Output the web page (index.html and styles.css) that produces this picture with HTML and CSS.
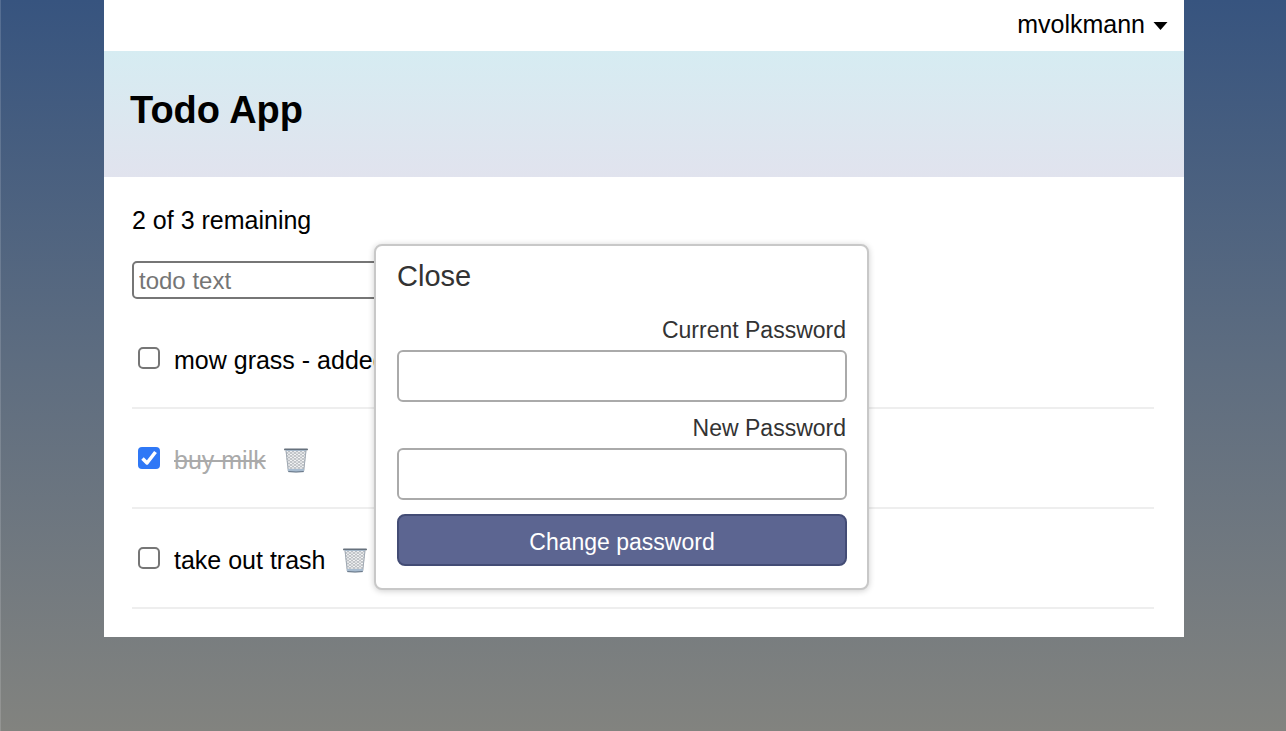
FILE: index.html
```html
<!DOCTYPE html>
<html lang="en">
<head>
<meta charset="utf-8">
<meta name="viewport" content="width=device-width, initial-scale=1">
<title>Todo App</title>
<link rel="stylesheet" href="styles.css">
</head>
<body class="page">
<svg class="defs" aria-hidden="true">
  <defs>
    <pattern id="mesh" width="4" height="3" patternUnits="userSpaceOnUse">
      <rect width="4" height="3" fill="#f3f4f5"/>
      <path d="M0 0L4 3M4 0L0 3" stroke="#a3a7ad" stroke-width="0.7"/>
    </pattern>
    <symbol id="trash" viewBox="0 0 26 26">
      <path d="M2.5 2.5H23.500L21 24.500H5Z" fill="url(#mesh)"/>
      <path d="M3 3.500L5.300 24M23 3.500L20.700 24" stroke="#a0a9b3" stroke-width="1" fill="none"/>
      <path d="M5 22H21L20.800 24.500Q13 25.500 5.200 24.500Z" fill="#a9bdd1"/>
      <path d="M5.300 24.600Q13 25.500 20.700 24.600" stroke="#5d6c7d" stroke-width="1" fill="none"/>
      <rect x="1" y="1.500" width="24" height="1.800" rx="0.9" fill="#66717d"/>
      <path d="M3 3.600H23" stroke="#a5b8ca" stroke-width="1"/>
    </symbol>
  </defs>
</svg>
<div class="panel">
  <nav class="account">
    <button class="account-button" type="button">mvolkmann
      <svg class="caret" viewBox="0 0 14 8" aria-hidden="true"><path d="M0 0H14L7 8Z"/></svg>
    </button>
  </nav>
  <header class="hero"><h1 class="title">Todo App</h1></header>
  <main class="content">
    <p class="status">2 of 3 remaining</p>
    <form class="new-todo">
      <input class="todo-input" type="text" placeholder="todo text" aria-label="todo text">
    </form>
    <ul class="todos">
      <li class="todo">
        <input class="check" type="checkbox" id="todo-1">
        <label class="todo-label" for="todo-1">mow grass - added</label>
      </li>
      <li class="todo">
        <input class="check" type="checkbox" id="todo-2" checked>
        <label class="todo-label done" for="todo-2">buy milk</label>
        <button class="delete" type="button" aria-label="Delete buy milk"><svg class="trash"><use href="#trash"/></svg></button>
      </li>
      <li class="todo">
        <input class="check" type="checkbox" id="todo-3">
        <label class="todo-label" for="todo-3">take out trash</label>
        <button class="delete" type="button" aria-label="Delete take out trash"><svg class="trash"><use href="#trash"/></svg></button>
      </li>
    </ul>
  </main>
  <form class="popup">
    <button class="close" type="button">Close</button>
    <label class="popup-label" for="current">Current Password</label>
    <input class="popup-input" type="password" id="current">
    <label class="popup-label" for="new">New Password</label>
    <input class="popup-input" type="password" id="new">
    <button class="submit" type="button">Change password</button>
  </form>
</div>
</body>
</html>
```

FILE: styles.css
```css
* {
  box-sizing: border-box;
}

.page {
  margin: 0;
  padding-left: 1px;
  min-height: 100vh;
  border-left: 1px solid rgb(255 255 255 / 15%);
  background: linear-gradient(#37547f, #5e6d80 50%, #82837f);
  color: #000;
  font: 25px/30px "Liberation Sans", Arial, sans-serif;
}

.defs {
  position: absolute;
  width: 0;
  height: 0;
}

.panel {
  position: relative;
  max-width: 1080px;
  margin: 0 auto;
  background: #fff;
}

.account {
  display: flex;
  justify-content: flex-end;
  padding: 9px 16px 12px;
}

.account-button {
  display: flex;
  align-items: center;
  gap: 8px;
  padding: 0;
  border: 0;
  background: none;
  color: inherit;
  font: inherit;
}

.caret {
  width: 15px;
  height: 8px;
  margin-top: 4px;
}

.hero {
  padding: 36px 26px 44px;
  background: linear-gradient(#d6ecf2, #e1e3ee);
}

.title {
  margin: 0;
  font-size: 38px;
  line-height: 46px;
}

.content {
  padding: 28px 30px 28px 28px;
}

.status {
  margin: 0 0 26px;
}

.new-todo {
  display: flex;
}

.todo-input {
  width: 400px;
  height: 38px;
  padding: 4px 5px 2px;
  border: 2px solid #767676;
  border-radius: 5px;
  background: #fff;
  font: inherit;
  font-size: 24px;
}

.todo-input::placeholder {
  color: #757575;
}

.todos {
  margin: 10px 0 0;
  padding: 0;
  list-style: none;
}

.todo {
  display: flex;
  align-items: center;
  height: 100px;
  padding-left: 6px;
  border-bottom: 2px solid #eee;
}

.check {
  appearance: none;
  width: 22px;
  height: 22px;
  margin: 0 14px 0 0;
  border: 2px solid #767676;
  border-radius: 5px;
  background: #fff;
}

.check:checked {
  border: 0;
  border-radius: 4px;
  background: #2f78f6 url("data:image/svg+xml,%3Csvg xmlns='http://www.w3.org/2000/svg' viewBox='0 0 22 22'%3E%3Cpath d='M4.500 11.500L9 16L17.500 5' fill='none' stroke='white' stroke-width='3.500' stroke-linejoin='round'/%3E%3C/svg%3E");
}

.todo-label {
  padding-top: 4px;
}

.done {
  color: #aaa;
  text-decoration: line-through;
}

.delete {
  display: flex;
  margin-left: 17px;
  padding: 4px 0 0;
  border: 0;
  background: none;
}

.trash {
  width: 26px;
  height: 26px;
}

.popup {
  position: absolute;
  top: 244px;
  left: 270px;
  display: flex;
  flex-direction: column;
  width: 495px;
  padding: 15px 20px 22px 21px;
  border: 2px solid #c8c8c8;
  border-radius: 8px;
  background: #fff;
  box-shadow: 0 1px 6px rgb(0 0 0 / 20%);
  color: #333;
  font-size: 23px;
}

.close {
  align-self: flex-start;
  margin-bottom: 24px;
  padding: 0;
  border: 0;
  background: none;
  color: inherit;
  font: inherit;
  font-size: 29px;
  line-height: 30px;
}

.popup-label {
  margin-bottom: 5px;
  padding-right: 1px;
  text-align: right;
}

.popup-input {
  width: 100%;
  height: 52px;
  margin-bottom: 11px;
  padding: 8px 12px;
  border: 2px solid #aaa;
  border-radius: 6px;
  background: #fff;
  font: inherit;
}

.submit {
  height: 52px;
  margin-top: 3px;
  padding: 4px 0 0;
  border: 2px solid #434c75;
  border-radius: 8px;
  background: #5c6591;
  color: #fff;
  font: inherit;
}
```
